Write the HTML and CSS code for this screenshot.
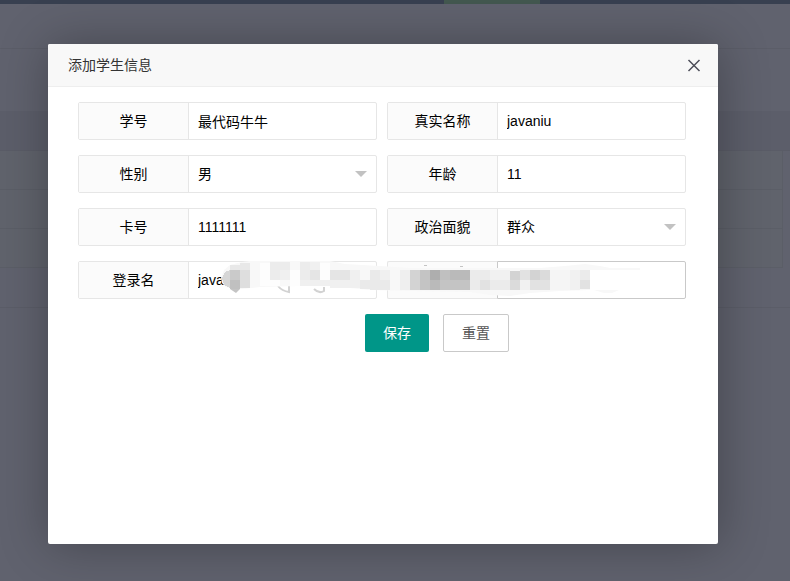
FILE: index.html
```html
<!DOCTYPE html>
<html lang="zh-CN">
<head>
<meta charset="utf-8">
<meta name="viewport" content="width=device-width, initial-scale=1">
<title>添加学生信息</title>
<link rel="stylesheet" href="styles.css">
</head>
<body>
<div class="page" aria-hidden="true">
  <div class="topbar"><span class="topbar-active"></span></div>
  <div class="tabs"></div>
  <div class="toolbar"></div>
  <div class="table-head"></div>
  <div class="table-row"></div>
  <div class="table-row"></div>
  <div class="table-row"></div>
  <div class="pager"></div>
</div>
<div class="overlay">
  <section class="dialog" role="dialog" aria-labelledby="dialog-title">
    <header class="dialog-head">
      <h1 class="dialog-title" id="dialog-title">添加学生信息</h1>
      <button class="close" type="button" aria-label="关闭">
        <svg width="14" height="14" viewBox="0 0 14 14"><path d="M1.5 2 12.5 13M12.5 2 1.5 13" fill="none" stroke="#4c4d58" stroke-width="1.5"/></svg>
      </button>
    </header>
    <form class="form">
      <div class="fields">
        <div class="field"><label for="no">学号</label><input id="no" type="text" value="最代码牛牛"></div>
        <div class="field"><label for="name">真实名称</label><input id="name" type="text" value="javaniu"></div>
        <div class="field"><label for="sex">性别</label><div class="select"><select id="sex"><option>男</option><option>女</option></select></div></div>
        <div class="field"><label for="age">年龄</label><input id="age" type="text" value="11"></div>
        <div class="field"><label for="card">卡号</label><input id="card" type="text" value="1111111"></div>
        <div class="field"><label for="party">政治面貌</label><div class="select"><select id="party"><option>群众</option><option>党员</option></select></div></div>
        <div class="field"><label for="login">登录名</label><input id="login" type="text" value="java"></div>
        <div class="field focused"><label for="secret"></label><input id="secret" type="text" aria-label="密码"></div>
        <svg class="mosaic" width="440" height="38" viewBox="210 261 440 38" aria-hidden="true">
          <g fill="none" stroke="#d2d2d2" stroke-width="2">
            <path d="M278 286Q282 291 289 292V286M314 289Q319 294 324 291V287"/>
          </g>
          <path fill="#c4c4c4" d="M230 289h10l-4 4zM424 265h3v1h-3zM460 266h3v1h-3z"/>
          <path fill="#f8f8f8" d="M221 278 224 270 230 265 242 262 250 261H330L345 264 380 266 410 268H540L565 266 585 264 600 266 610 268H640V270H590V290L560 291 530 293 510 296 490 295 470 292 410 291 370 290 330 286H300L260 287 242 289H234L226 287 222 283ZM594 290H619L612 293H604Z"/>
          <g shape-rendering="crispEdges">
            <path fill="#e8e8e8" d="M230 265h10v5h-10zM240 263h10v7h-10z"/>
            <path fill="#d6d6d6" d="M222 278 225 272 230 270V288L224 285Z"/>
            <path fill="#cacaca" d="M230 270h10v10h-10z"/><path fill="#c0c0c0" d="M230 280h10v9h-10z"/>
            <path fill="#dedede" d="M240 270h10v18h-10z"/>
            <path fill="#fdfdfd" d="M260 263h10v23h-10zM270 280h10v6h-10zM290 270h10v16h-10zM320 263h10v21h-10z"/>
            <path fill="#ececec" d="M270 262h10v18h-10zM280 262h10v8h-10zM300 262h10v8h-10zM300 270h10v16h-10z"/>
            <path fill="#f0f0f0" d="M310 262h10v8h-10zM280 270h10v10h-10zM300 280h30v6h-30zM350 270h10v10h-10zM380 270h10v10h-10zM330 280h30v8h-30z"/>
            <path fill="#e5e5e5" d="M310 270h10v10h-10zM330 270h20v10h-20z"/>
            <path fill="#eaeaea" d="M370 270h10v20h-10zM360 280h10v9h-10zM380 280h10v10h-10z"/>
            <path fill="#efefef" d="M400 270h10v20h-10z"/>
            <path fill="#d3d3d3" d="M410 270h10v20h-10zM530 270h10v10h-10zM510 271h10v9h-10z"/>
            <path fill="#c4c4c4" d="M420 270h10v20h-10zM440 280h30v10h-30z"/>
            <path fill="#aeaeae" d="M430 270h10v10h-10z"/>
            <path fill="#bababa" d="M430 280h10v10h-10zM450 270h20v10h-20z"/><path fill="#c0c0c0" d="M440 270h10v10h-10z"/>
            <path fill="#ebebeb" d="M470 270h20v10h-20zM470 280h10v10h-10zM490 280h20v10h-20zM580 270h10v10h-10z"/>
            <path fill="#f1f1f1" d="M490 270h20v10h-20zM520 280h10v10h-10zM570 270h10v20h-10z"/>
            <path fill="#f5f5f5" d="M550 270h20v20h-20z"/>
            <path fill="#e2e2e2" d="M480 280h10v10h-10zM520 270h10v10h-10zM530 280h20v10h-20zM580 280h10v9h-10z"/>
            <path fill="#dbdbdb" d="M510 280h10v10h-10zM540 270h10v10h-10z"/>
          </g>
        </svg>
      </div>
      <div class="actions">
        <button class="btn btn-primary" type="submit">保存</button>
        <button class="btn btn-plain" type="reset">重置</button>
      </div>
    </form>
  </section>
</div>
</body>
</html>
```
FILE: styles.css
```css
* { box-sizing: border-box; }

body {
  margin: 0;
  min-height: 100vh;
  display: grid;
  overflow: hidden;
  background: #60626e;
  font: 14px/20px "Liberation Sans", "Noto Sans CJK SC", sans-serif;
  color: #000;
}

.page, .overlay { grid-area: 1 / 1; }

.topbar {
  display: flex;
  justify-content: center;
  height: 4px;
  padding-left: 193px;
  background: #384050;
}
.topbar-active { width: 96px; background: #43584f; }
.tabs { height: 45px; border-bottom: 1px solid #5b5d68; }
.toolbar { height: 62px; }
.table-head { height: 40px; background: #5c5e6a; border-bottom: 1px solid #5a5c67; }
.table-row {
  height: 39px;
  margin-right: 7px;
  background: #60636c;
  border-right: 1px solid #5b5e67;
  border-bottom: 1px solid #5b5e67;
}
.pager { height: 40px; border-bottom: 1px solid #5b5d68; }

.overlay {
  display: grid;
  padding: 44px 72px 37px 48px;
}

.dialog {
  z-index: 1;
  border-radius: 2px;
  background: #fff;
  box-shadow: 1px 1px 50px rgba(0, 0, 0, .3);
}

.dialog-head {
  display: flex;
  align-items: center;
  justify-content: space-between;
  height: 43px;
  padding: 0 17px 0 20px;
  border-bottom: 1px solid #eee;
  border-radius: 2px 2px 0 0;
  background: #f8f8f8;
}
.dialog-title { margin: 0; font-size: 14px; line-height: 20px; font-weight: 400; color: #333; }
.close { display: flex; padding: 0; border: 0; background: none; }

.form { padding: 15px 32px 15px 30px; }

.fields {
  position: relative;
  display: grid;
  grid-template-columns: 1fr 1fr;
  gap: 15px 10px;
}

.field {
  display: flex;
  height: 38px;
  border: 1px solid #e6e6e6;
  border-radius: 2px;
}
.field label {
  flex: none;
  width: 110px;
  border-right: 1px solid #e6e6e6;
  background: #fbfbfb;
  line-height: 36px;
  text-align: center;
}
.field input, .field select {
  flex: 1;
  min-width: 0;
  width: 100%;
  height: 36px;
  padding: 0 9px;
  border: 0;
  outline: 0;
  appearance: none;
  background: none;
  font: inherit;
  color: #000;
}
.select { position: relative; flex: 1; }
.select::after {
  content: "";
  position: absolute;
  top: 15px;
  right: 9px;
  border: 6px solid transparent;
  border-top-color: #c2c2c2;
  border-bottom: 0;
  pointer-events: none;
}
.focused { border: 0; }
.focused label {
  border: 1px solid #e6e6e6;
  border-right: 0;
  border-radius: 2px 0 0 2px;
}
.focused input { height: 38px; border: 1px solid #c9c9c9; border-radius: 0 2px 2px 0; }

.mosaic { position: absolute; bottom: 0; left: 132px; }

.actions {
  display: flex;
  justify-content: center;
  gap: 14px;
  margin-top: 15px;
  padding-left: 110px;
}
.btn {
  height: 38px;
  padding: 0 18px;
  border: 0;
  border-radius: 2px;
  font: inherit;
}
.btn-primary { background: #009688; color: #fff; }
.btn-plain { border: 1px solid #c9c9c9; background: #fff; color: #555; }
```
